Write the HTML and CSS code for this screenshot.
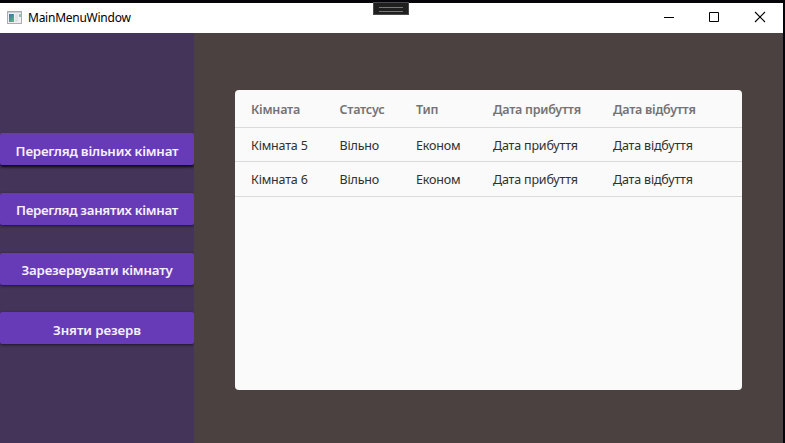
FILE: index.html
```
<!DOCTYPE html>
<html lang="uk">
<head>
<meta charset="utf-8">
<title>MainMenuWindow</title>
<link rel="stylesheet" href="styles.css">
</head>
<body>
<div class="window">
  <header class="titlebar">
    <svg class="app-icon" width="16" height="14" viewBox="0 0 16 14">
      <defs><linearGradient id="pane" x1="0" y1="0" x2="0.6" y2="1"><stop offset="0" stop-color="#3d74a8"/><stop offset="1" stop-color="#55b080"/></linearGradient></defs>
      <rect x=".5" y=".5" width="14" height="12" fill="#f0f0f0" stroke="#a9adb2"/>
      <path d="M1 1.5h13" stroke="#c9cdd2"/>
      <rect x="2" y="3" width="5" height="8" fill="url(#pane)"/>
      <rect x="8" y="3" width="3" height="8" fill="#dfe1e6"/>
      <rect x="12" y="3" width="2" height="3" fill="#8dc4ae"/>
    </svg>
    <h1 class="title">MainMenuWindow</h1>
    <div class="controls">
      <svg width="46" height="30" viewBox="0 0 46 30"><path d="M18 14.5h10" stroke="#000"/></svg>
      <svg width="46" height="30" viewBox="0 0 46 30"><path d="M17.5 9.5h9v9h-9z" fill="none" stroke="#000"/></svg>
      <svg width="46" height="30" viewBox="0 0 46 30"><path d="M17 9l10 10M27 9L17 19" stroke="#000" stroke-width="1.1"/></svg>
    </div>
    <div class="grip"></div>
  </header>
  <div class="content">
    <nav class="sidebar">
      <button class="btn btn-focus"><span>Перегляд вільних кімнат</span></button>
      <button class="btn btn-tight"><span>Перегляд занятих кімнат</span></button>
      <button class="btn btn-raised"><span>Зарезервувати кімнату</span></button>
      <button class="btn btn-short"><span>Зняти резерв</span></button>
    </nav>
    <main class="main">
      <section class="card">
        <div class="row head"><span>Кімната</span><span>Статсус</span><span>Тип</span><span>Дата прибуття</span><span>Дата відбуття</span></div>
        <div class="row"><span>Кімната 5</span><span>Вільно</span><span>Економ</span><span>Дата прибуття</span><span>Дата відбуття</span></div>
        <div class="row last"><span>Кімната 6</span><span>Вільно</span><span>Економ</span><span>Дата прибуття</span><span>Дата відбуття</span></div>
      </section>
    </main>
  </div>
</div>
</body>
</html>
```
FILE: styles.css
```
* { box-sizing: border-box; }
body {
  margin: 0;
  width: 785px;
  height: 443px;
  overflow: hidden;
  background: #050509;
  font-family: "Noto Sans", "Open Sans", sans-serif;
}
.window {
  display: flex;
  flex-direction: column;
  width: 783px;
  height: 443px;
  padding-top: 3px;
}
.titlebar {
  position: relative;
  display: flex;
  align-items: center;
  height: 30px;
  padding-left: 7px;
  background: #fff;
}
.app-icon { margin-top: -1px; }
.title {
  margin: 0 0 0 5px;
  font-size: 12px;
  font-weight: 400;
  line-height: 30px;
  letter-spacing: -0.25px;
  color: #000;
}
.controls { display: flex; margin: 0 -1px 0 auto; }
.controls svg { display: block; }
.grip {
  position: absolute;
  left: 373px;
  top: -1px;
  width: 36px;
  height: 13px;
  padding: 4px 5px;
  border: 1px solid #4a4a4a;
  background: #1f1f20;
}
.grip::before {
  content: "";
  display: block;
  height: 3px;
  border-top: 1px solid #777;
  border-bottom: 1px solid #777;
}
.content { display: flex; flex: 1; min-height: 0; }
.sidebar {
  display: flex;
  flex-direction: column;
  gap: 28px;
  width: 194px;
  padding-top: 100px;
  background: #443459;
}
.btn {
  height: 32px;
  padding: 4px 0 0;
  border: 0;
  border-radius: 2px;
  background: #673ab7;
  box-shadow: 0 1px 3px rgba(0, 0, 0, 0.6);
  font: 600 13.3px/28px "Noto Sans", "Open Sans", sans-serif;
  letter-spacing: -0.2px;
  color: #f5f0fb;
  white-space: nowrap;
}
.btn-focus { box-shadow: 0 2px 3px rgba(0, 0, 0, 0.85); }
.btn-tight { padding-top: 2px; letter-spacing: -0.3px; }
.btn-raised { padding-top: 2px; margin-bottom: -1px; }
.btn-short { letter-spacing: -0.1px; }
.main {
  flex: 1;
  padding: 57px 41px 53px;
  background: #4b4141;
}
.card {
  height: 300px;
  border-radius: 4px;
  background: #fafafa;
  overflow: hidden;
}
.row {
  display: grid;
  grid-template-columns: 88.5px 76.5px 77px 120px 1fr;
  height: 34px;
  padding: 2px 0 0 16px;
  border-bottom: 1px solid #dadada;
  font-size: 12.5px;
  line-height: 32px;
  letter-spacing: -0.18px;
  color: #303030;
  white-space: nowrap;
}
.head {
  height: 38px;
  font-weight: 600;
  line-height: 36px;
  letter-spacing: -0.24px;
  color: #737373;
}
.last { height: 35px; }
```
